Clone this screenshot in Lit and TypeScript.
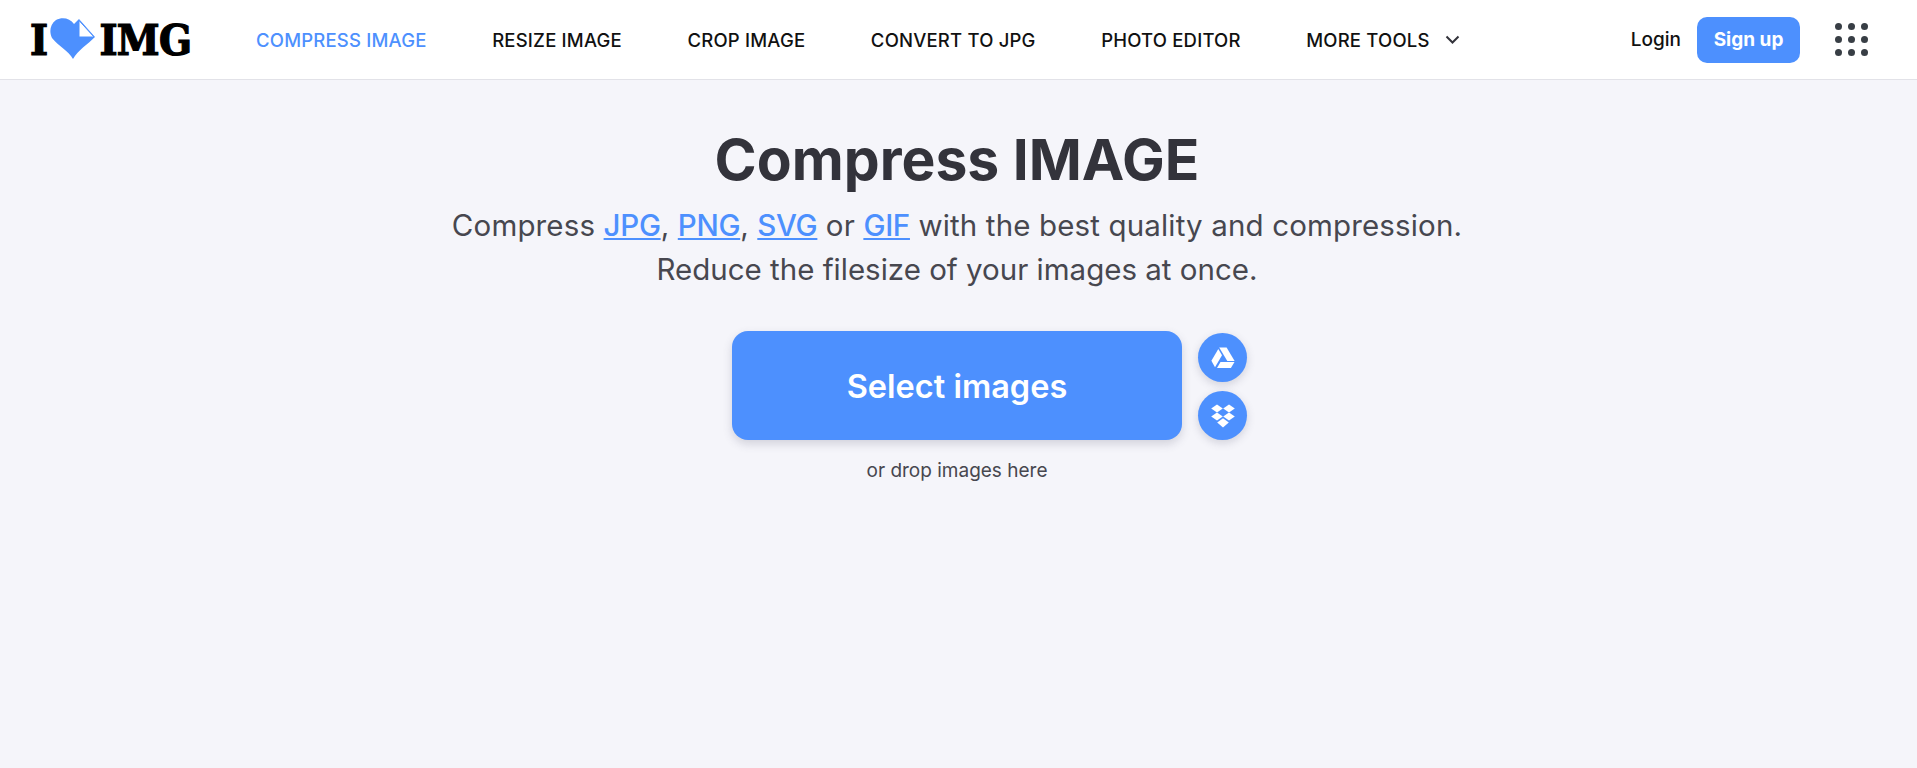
import { LitElement, html, css } from 'lit'
import { customElement } from 'lit/decorators.js'

const NAV = ['RESIZE IMAGE', 'CROP IMAGE', 'CONVERT TO JPG', 'PHOTO EDITOR']

@customElement('app-root')
export class AppRoot extends LitElement {
  static styles = css`
    :host {
      display: block;
      min-height: 768px;
      background: #f5f5fa;
      font-family: Inter, 'Noto Sans', sans-serif;
      color: #33333b;
    }
    a {
      color: inherit;
      text-decoration: none;
    }
    .header {
      display: flex;
      align-items: center;
      height: 80px;
      box-sizing: border-box;
      background: #fff;
      border-bottom: 1px solid #e2e2e8;
      padding: 0 49px 0 30px;
    }
    .logo {
      display: flex;
      align-items: center;
      width: 226px;
      color: #000;
      font-family: 'DejaVu Serif Condensed', 'DejaVu Serif', serif;
      font-stretch: condensed;
      font-weight: 700;
      font-size: 43px;
      line-height: 44px;
      letter-spacing: -0.7px;
      -webkit-text-stroke: 1.2px #000;
    }
    .logo svg {
      margin: 0 4px 2px 3px;
      flex: none;
    }
    .nav {
      display: flex;
      align-items: center;
      gap: 65.5px;
      font-size: 18.5px;
      letter-spacing: 0.2px;
      font-weight: 500;
      color: #111;
    }
    .nav .active {
      color: #4d90fe;
    }
    .more {
      display: flex;
      align-items: center;
      gap: 15px;
    }
    .right {
      display: flex;
      align-items: center;
      margin-left: auto;
    }
    .login {
      font-size: 19px;
      font-weight: 500;
      color: #111;
      margin-right: 16px;
    }
    .signup {
      display: flex;
      align-items: center;
      justify-content: center;
      width: 103px;
      height: 46px;
      border-radius: 10px;
      background: #4d90fe;
      color: #fff;
      font-size: 19px;
      font-weight: 700;
      margin-right: 35px;
    }
    .apps {
      display: grid;
      grid-template-columns: repeat(3, 7px);
      gap: 6px;
    }
    .apps span {
      width: 7px;
      height: 7px;
      border-radius: 50%;
      background: #383e45;
    }
    .main {
      padding: 47px 3px 0 0;
      text-align: center;
    }
    h1 {
      margin: 0;
      font-size: 57px;
      line-height: 66px;
      font-weight: 700;
      color: #33333b;
    }
    .sub {
      margin: 10px 0 0;
      font-size: 29.5px;
      line-height: 44px;
      font-weight: 400;
      color: #47474f;
    }
    .sub .first {
      letter-spacing: 0.15px;
    }
    .sub a {
      color: #4d90fe;
      font-weight: 500;
      letter-spacing: -0.3px;
      text-decoration: underline;
    }
    .uploader {
      display: grid;
      grid-template-columns: 1fr 450px 1fr;
      column-gap: 16px;
      margin-top: 40px;
    }
    .select {
      grid-column: 2;
      display: flex;
      align-items: center;
      justify-content: center;
      height: 109px;
      box-sizing: border-box;
      padding-top: 2px;
      border-radius: 16px;
      background: #4d90fe;
      color: #fff;
      font-size: 32.5px;
      font-weight: 600;
      box-shadow: 0 4px 10px rgba(72, 72, 100, 0.2);
    }
    .side {
      display: flex;
      flex-direction: column;
      justify-content: flex-end;
      gap: 9px;
    }
    .circle {
      display: flex;
      align-items: center;
      justify-content: center;
      width: 49px;
      height: 49px;
      border-radius: 50%;
      background: #4d90fe;
      box-shadow: 0 3px 8px rgba(72, 72, 100, 0.2);
    }
    .drop {
      margin: 19px 0 0;
      font-size: 19px;
      line-height: 24px;
      color: #47474f;
    }
  `

  render() {
    return html`
      <header class="header">
        <a class="logo" href="#">
          <span>I</span>
          <svg width="45" height="41" viewBox="0 0 45 41">
            <path
              d="M23 41C19 33 8 28 2 20C-1 14 0 6 6 2C12-1 20 0 24 6L29 1L45 19C38 26 28 32 23 41Z"
              fill="#4d90fe"
            />
            <path d="M29 2.5V19H44Z" fill="#fff" stroke="#4d90fe" stroke-width="1" />
          </svg>
          <span>IMG</span>
        </a>
        <nav class="nav">
          <a class="active" href="#">COMPRESS IMAGE</a>
          ${NAV.map((item) => html`<a href="#">${item}</a>`)}
          <a class="more" href="#">
            MORE TOOLS
            <svg width="15" height="9" viewBox="0 0 15 9">
              <path d="M1.5 1.5L7.5 7.5L13.5 1.5" fill="none" stroke="#33333b" stroke-width="2" />
            </svg>
          </a>
        </nav>
        <div class="right">
          <a class="login" href="#">Login</a>
          <a class="signup" href="#">Sign up</a>
          <div class="apps">${Array.from({ length: 9 }, () => html`<span></span>`)}</div>
        </div>
      </header>
      <main class="main">
        <h1>Compress IMAGE</h1>
        <p class="sub">
          <span class="first"
            >Compress <a href="#">JPG</a>, <a href="#">PNG</a>, <a href="#">SVG</a> or <a href="#">GIF</a> with
            the best quality and compression.</span
          ><br />
          Reduce the filesize of your images at once.
        </p>
        <div class="uploader">
          <a class="select" href="#">Select images</a>
          <div class="side">
            <a class="circle" href="#">
              <svg width="24" height="22" viewBox="0 0 24 22" fill="#fff">
                <path d="M8.2 0.5H15.6L23.6 14H16.3Z" />
                <path d="M7.3 2L0.4 13.8L4 20.2L11 8.2Z" />
                <path d="M6 21H19.9L23.5 15H9.5Z" />
              </svg>
            </a>
            <a class="circle" href="#">
              <svg width="24" height="24" viewBox="0 0 24 24" fill="#fff">
                <path d="M6 0.5L11.8 4.5L6 8.5L0.2 4.5Z" />
                <path d="M18 0.5L23.8 4.5L18 8.5L12.2 4.5Z" />
                <path d="M6 8.5L11.8 12.5L6 16.5L0.2 12.5Z" />
                <path d="M18 8.5L23.8 12.5L18 16.5L12.2 12.5Z" />
                <path d="M12 14.2L17.8 18.4L12 23.5L6.2 18.4Z" />
              </svg>
            </a>
          </div>
        </div>
        <p class="drop">or drop images here</p>
      </main>
    `
  }
}
